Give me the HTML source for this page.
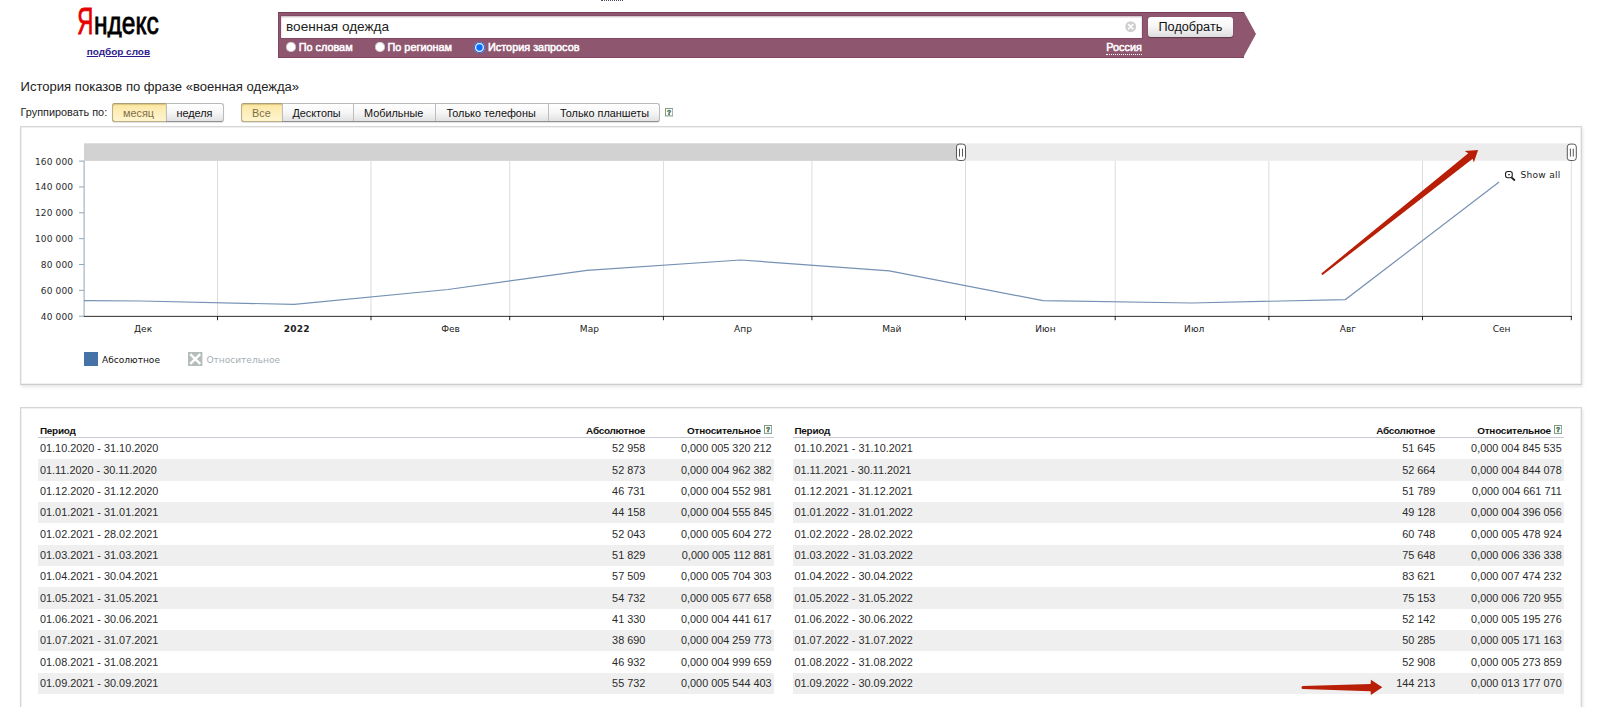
<!DOCTYPE html>
<html lang="ru">
<head>
<meta charset="utf-8">
<title>Яндекс — подбор слов: история запросов</title>
<style>
html,body{margin:0;padding:0;background:#fff;}
body{width:1600px;height:707px;overflow:hidden;position:relative;font-family:"Liberation Sans",sans-serif;font-size:10.87px;color:#000;}
.t{position:absolute;white-space:pre;margin:0;padding:0;}
.abs{position:absolute;}
.bar{position:absolute;left:278px;top:12px;width:966px;height:45.7px;background:#8f566f;box-shadow:inset 0 1px 0 #7a3c5c, inset 1px 0 0 #834761, inset 0 -1px 0 #82455f;}
.bar:after{content:"";position:absolute;left:966px;top:0;width:0;height:0;border-top:22.85px solid transparent;border-bottom:22.85px solid transparent;border-left:12px solid #8f566f;}
.inp{position:absolute;left:281px;top:16.4px;width:861px;height:21.6px;background:#fff;box-shadow:0 0 0 0.6px #7f4260, inset 0 1px 2px rgba(100,40,70,.38);}
.radio{position:absolute;width:10px;height:10px;border-radius:50%;background:#fff;box-shadow:inset 0 0 0 .6px #b9a6ae;}
.radio.on{width:10.8px;height:10.8px;margin:-0.4px;box-shadow:inset 0 0 0 1px #2b62d9, inset 0 0 0 2.3px #e2f5ff;background:#0a6cff;}
.btn{position:absolute;left:1148px;top:17px;width:84.7px;height:20.3px;border-radius:3px;background:linear-gradient(#fff 0%,#f7f7f7 45%,#dedede 100%);box-shadow:0 1px 1px rgba(0,0,0,.35);}
.grp{position:absolute;top:103.2px;height:18.5px;border:1px solid #b9b9b9;border-bottom-color:#8f8f8f;border-radius:3px;background:linear-gradient(#fff 0%,#f6f6f6 50%,#e2e2e2 100%);box-sizing:border-box;box-shadow:0 1px 1px rgba(0,0,0,.12);}
.grp i{position:absolute;top:0;bottom:0;width:1px;background:#bdbdbd;}
.grp b{position:absolute;top:-1px;bottom:-1px;left:-1px;box-sizing:content-box;border:1px solid #bdb085;border-top-color:#aa9e76;border-right:0;border-radius:3px 0 0 3px;background:linear-gradient(#fbe7a0 0%,#fdedb6 40%,#fff4d0 100%);box-shadow:inset 0 1px 1px rgba(150,120,40,.3);font-weight:normal;}
.panel{position:absolute;border:1px solid #d6d6d6;border-bottom-color:#cdcdcd;background:#fff;box-sizing:border-box;box-shadow:1px 2px 3px rgba(0,0,0,.10), inset 0 0 0 1px #f0f0f0;}
.row{position:absolute;height:21.34px;background:#efefef;}
.hl{position:absolute;height:1px;background:#c9c9d6;}
a.t{color:#2c1a8c;text-decoration:underline;}
.w{-webkit-text-stroke:0.5px #fff;}
</style>
</head>
<body>

<header>
<div class="abs" style="left:77px;top:0;width:90px;height:42px;">
<svg class="abs" style="left:0;top:0" width="90" height="42" viewBox="0 0 90 42"><defs><clipPath id="lc"><rect x="0" y="0" width="90" height="37.4"/></clipPath></defs><g font-family="Liberation Sans, sans-serif" clip-path="url(#lc)" stroke-width="0.75"><text x="0" y="0" transform="translate(0.15,34.3) scale(0.6,1)" font-size="37.2" fill="#e60000" stroke="#e60000" vector-effect="non-scaling-stroke">Я</text><text x="0" y="0" transform="translate(17.0,34.3) scale(0.762,1)" fill="#000" stroke="#000" font-size="32.2" vector-effect="non-scaling-stroke">ндекс</text></g></svg>
</div>
<a class="t " style="left:86.70px;top:46px;font-size:9.97px;line-height:12px;font-weight:bold;color:#2c1a8c;">подбор слов</a>
<div class="abs" style="left:601px;top:0;width:22px;height:0;border-top:1px dotted #4a4f66"></div>
<div class="bar"></div>
<div class="inp"></div>
<span class="t " style="left:286.00px;top:18px;font-size:13.60px;line-height:17px;color:#222;">военная одежда</span>
<svg class="abs" style="left:1125px;top:21px" width="11.4" height="11.4" viewBox="0 0 12 12"><circle cx="6" cy="6" r="5.7" fill="#cfcfcf"/><path d="M3.8 3.8L8.2 8.2M8.2 3.8L3.8 8.2" stroke="#fff" stroke-width="1.7" stroke-linecap="round"/></svg>
<div class="btn"></div>
<span class="t " style="left:1158.50px;top:19px;font-size:12.68px;line-height:16px;color:#111;">Подобрать</span>
<span class="radio" style="left:285.8px;top:42.3px"></span>
<span class="t w" style="left:298.70px;top:40px;font-size:10.87px;line-height:14px;color:#fff;">По словам</span>
<span class="radio" style="left:374.8px;top:42.3px"></span>
<span class="t w" style="left:387.50px;top:40px;font-size:10.87px;line-height:14px;color:#fff;">По регионам</span>
<span class="radio on" style="left:474.7px;top:42.3px"></span>
<span class="t w" style="left:488.00px;top:40px;font-size:10.87px;line-height:14px;color:#fff;">История запросов</span>
<span class="t w" style="left:1106.30px;top:40px;font-size:10.87px;line-height:14px;color:#fff;">Россия</span>
<div class="abs" style="left:1106.3px;top:54px;width:35.6px;height:0;border-top:1px dotted #fff"></div>
</header>
<main>
<section class="controls">
<span class="t " style="left:20.60px;top:79px;font-size:13.05px;line-height:16px;color:#222;">История показов по фразе «военная одежда»</span>
<span class="t " style="left:20.60px;top:105px;font-size:10.87px;line-height:14px;color:#222;">Группировать по:</span>
<div class="grp" style="left:112px;width:111.6px;"><b style="width:52.6px"></b><i style="left:52.6px"></i></div>
<span class="t " style="left:123.00px;top:106px;font-size:10.87px;line-height:14px;color:#7d7048;">месяц</span>
<span class="t " style="left:176.40px;top:106px;font-size:10.87px;line-height:14px;color:#111;">неделя</span>
<div class="grp" style="left:241.2px;width:418.9px;"><b style="width:39.6px"></b><i style="left:39.6px"></i><i style="left:111.1px"></i><i style="left:193.3px"></i><i style="left:306.3px"></i></div>
<span class="t " style="left:252.00px;top:106px;font-size:10.87px;line-height:14px;color:#7d7048;">Все</span>
<span class="t " style="left:292.40px;top:106px;font-size:10.87px;line-height:14px;color:#111;">Десктопы</span>
<span class="t " style="left:364.00px;top:106px;font-size:10.87px;line-height:14px;color:#111;">Мобильные</span>
<span class="t " style="left:446.50px;top:106px;font-size:10.87px;line-height:14px;color:#111;">Только телефоны</span>
<span class="t " style="left:560.00px;top:106px;font-size:10.87px;line-height:14px;color:#111;">Только планшеты</span>
<svg class="abs" style="left:664.80px;top:108.30px" width="8.5" height="8.6"><rect x="0.5" y="0.5" width="7.3" height="7.4" fill="#fff" stroke="#7c9c84" stroke-width="1"/><text x="4.15" y="6.65" font-family="Liberation Sans, sans-serif" font-size="6.8" font-weight="bold" text-anchor="middle" fill="#3f704a" stroke="#3f704a" stroke-width="0.45">?</text></svg>
</section>
<section class="chart">
<div class="panel" style="left:20px;top:125.7px;width:1561.5px;height:259.5px;"></div>
<svg class="abs" style="left:0;top:126px" width="1600" height="258" viewBox="0 126 1600 258" font-family="DejaVu Sans, Liberation Sans, sans-serif" font-size="9.06">
<rect x="84" y="143.4" width="1487.5" height="17.4" fill="#ececec"/>
<rect x="84" y="143.4" width="877" height="17.4" fill="#d2d2d2"/>
<rect x="217.0" y="160.8" width="1" height="155.4" fill="#dcdcdc"/>
<rect x="370.5" y="160.8" width="1" height="155.4" fill="#dcdcdc"/>
<rect x="509.2" y="160.8" width="1" height="155.4" fill="#dcdcdc"/>
<rect x="662.9" y="160.8" width="1" height="155.4" fill="#dcdcdc"/>
<rect x="811.4" y="160.8" width="1" height="155.4" fill="#dcdcdc"/>
<rect x="965.0" y="160.8" width="1" height="155.4" fill="#dcdcdc"/>
<rect x="1114.7" y="160.8" width="1" height="155.4" fill="#dcdcdc"/>
<rect x="1268.4" y="160.8" width="1" height="155.4" fill="#dcdcdc"/>
<rect x="1422.0" y="160.8" width="1" height="155.4" fill="#dcdcdc"/>
<rect x="1570.8" y="160.8" width="1" height="155.4" fill="#dcdcdc"/>
<rect x="83.6" y="160.8" width="1" height="156" fill="#8fa6b8"/>
<rect x="79" y="160.60" width="5" height="1" fill="#8fa6b8"/>
<text x="73.2" y="164.50" text-anchor="end" fill="#2a2a2a" letter-spacing="0.12">160 000</text>
<rect x="79" y="186.45" width="5" height="1" fill="#8fa6b8"/>
<text x="73.2" y="190.35" text-anchor="end" fill="#2a2a2a" letter-spacing="0.12">140 000</text>
<rect x="79" y="212.30" width="5" height="1" fill="#8fa6b8"/>
<text x="73.2" y="216.20" text-anchor="end" fill="#2a2a2a" letter-spacing="0.12">120 000</text>
<rect x="79" y="238.15" width="5" height="1" fill="#8fa6b8"/>
<text x="73.2" y="242.05" text-anchor="end" fill="#2a2a2a" letter-spacing="0.12">100 000</text>
<rect x="79" y="264.00" width="5" height="1" fill="#8fa6b8"/>
<text x="73.2" y="267.90" text-anchor="end" fill="#2a2a2a" letter-spacing="0.12">80 000</text>
<rect x="79" y="289.85" width="5" height="1" fill="#8fa6b8"/>
<text x="73.2" y="293.75" text-anchor="end" fill="#2a2a2a" letter-spacing="0.12">60 000</text>
<rect x="79" y="315.70" width="5" height="1" fill="#8fa6b8"/>
<text x="73.2" y="319.60" text-anchor="end" fill="#2a2a2a" letter-spacing="0.12">40 000</text>
<rect x="84" y="315.85" width="1488" height="1.15" fill="#484848"/>
<rect x="217.0" y="316" width="1" height="4.2" fill="#222"/>
<rect x="370.5" y="316" width="1" height="4.2" fill="#222"/>
<rect x="509.2" y="316" width="1" height="4.2" fill="#222"/>
<rect x="662.9" y="316" width="1" height="4.2" fill="#222"/>
<rect x="811.4" y="316" width="1" height="4.2" fill="#222"/>
<rect x="965.0" y="316" width="1" height="4.2" fill="#222"/>
<rect x="1114.7" y="316" width="1" height="4.2" fill="#222"/>
<rect x="1268.4" y="316" width="1" height="4.2" fill="#222"/>
<rect x="1422.0" y="316" width="1" height="4.2" fill="#222"/>
<rect x="1570.8" y="316" width="1" height="4.2" fill="#222"/>
<text x="143.1" y="332" text-anchor="middle" fill="#222">Дек</text>
<text x="296.8" y="332" text-anchor="middle" fill="#222" font-weight="bold" letter-spacing="0.25">2022</text>
<text x="450.5" y="332" text-anchor="middle" fill="#222">Фев</text>
<text x="589.4" y="332" text-anchor="middle" fill="#222">Мар</text>
<text x="743.0" y="332" text-anchor="middle" fill="#222">Апр</text>
<text x="891.8" y="332" text-anchor="middle" fill="#222">Май</text>
<text x="1045.5" y="332" text-anchor="middle" fill="#222">Июн</text>
<text x="1194.2" y="332" text-anchor="middle" fill="#222">Июл</text>
<text x="1347.9" y="332" text-anchor="middle" fill="#222">Авг</text>
<text x="1501.6" y="332" text-anchor="middle" fill="#222">Сен</text>
<polyline fill="none" stroke="#7591b3" stroke-width="1.2" points="84.0,300.6 140.7,301.0 294.3,304.4 448.0,289.5 586.9,270.3 740.6,260.0 889.3,270.9 1043.0,300.6 1191.7,303.0 1345.4,299.6 1499.1,182.0"/>
<rect x="956.5" y="144.1" width="9" height="16.4" rx="2.8" fill="#fff" stroke="#444" stroke-width="0.9"/>
<rect x="959.10" y="148.6" width="0.9" height="8" fill="#444"/><rect x="962.00" y="148.6" width="0.9" height="8" fill="#444"/>
<rect x="1567.3" y="144.1" width="9" height="16.4" rx="2.8" fill="#fff" stroke="#444" stroke-width="0.9"/>
<rect x="1569.90" y="148.6" width="0.9" height="8" fill="#444"/><rect x="1572.80" y="148.6" width="0.9" height="8" fill="#444"/>
<g fill="none" stroke="#1e1e1e"><rect x="1505.55" y="171.5" width="6.7" height="6.3" rx="2.2" stroke-width="1.1"/><path d="M1512.1 178.1L1514.4 179.9" stroke-width="1.9" stroke-linecap="round"/><path d="M1508 174.7H1510" stroke-width="1"/></g>
<text x="1520.6" y="178" fill="#222" letter-spacing="0.25">Show all</text>
<rect x="84" y="352" width="14" height="14" fill="#4572a7"/>
<text x="102" y="362.6" fill="#111">Абсолютное</text>
<rect x="188" y="352" width="14.4" height="14" fill="#b4bcbc"/>
<path d="M190.2 354.2L200.2 363.8M200.2 354.2L190.2 363.8" stroke="#fff" stroke-width="2.4"/>
<text x="206.4" y="362.6" fill="#a6aeb4">Относительное</text>
<path d="M1321.9 272.9 L1468.3 153.2 L1464.7 151.1 L1478.1 149.9 L1473.8 162.6 L1472.7 158.8 L1323.3 274.6 A1.1 1.1 0 0 1 1321.9 272.9 Z" fill="#b81f06"/>
</svg>
</section>
<section class="history">
<div class="panel" style="left:20px;top:406.7px;width:1561.5px;height:320px;"></div>
<span class="t " style="left:40.00px;top:425px;font-size:9.97px;line-height:12px;font-weight:bold;color:#111;letter-spacing:-0.3px;">Период</span>
<span class="t " style="right:955.00px;top:425px;font-size:9.97px;line-height:12px;font-weight:bold;color:#111;letter-spacing:-0.27px;">Абсолютное</span>
<span class="t " style="right:839.30px;top:425px;font-size:9.97px;line-height:12px;font-weight:bold;color:#111;letter-spacing:-0.25px;">Относительное</span>
<svg class="abs" style="left:763.90px;top:425.00px" width="8.4" height="9.1"><rect x="0.5" y="0.5" width="7.2" height="7.9" fill="#fff" stroke="#7c9c84" stroke-width="1"/><text x="4.10" y="6.90" font-family="Liberation Sans, sans-serif" font-size="6.8" font-weight="bold" text-anchor="middle" fill="#3f704a" stroke="#3f704a" stroke-width="0.45">?</text></svg>
<div class="hl" style="left:37.75px;width:736.00px;top:437.3px"></div>
<span class="t " style="left:40.00px;top:441px;font-size:10.87px;line-height:14px;color:#2b2b2b;">01.10.2020 - 31.10.2020</span>
<span class="t " style="right:954.70px;top:441px;font-size:10.87px;line-height:14px;color:#2b2b2b;">52 958</span>
<span class="t " style="right:828.40px;top:441px;font-size:10.87px;line-height:14px;color:#2b2b2b;">0,000 005 320 212</span>
<div class="row" style="left:37.75px;width:736.00px;top:459.39px"></div>
<span class="t " style="left:40.00px;top:463px;font-size:10.87px;line-height:14px;color:#2b2b2b;">01.11.2020 - 30.11.2020</span>
<span class="t " style="right:954.70px;top:463px;font-size:10.87px;line-height:14px;color:#2b2b2b;">52 873</span>
<span class="t " style="right:828.40px;top:463px;font-size:10.87px;line-height:14px;color:#2b2b2b;">0,000 004 962 382</span>
<span class="t " style="left:40.00px;top:484px;font-size:10.87px;line-height:14px;color:#2b2b2b;">01.12.2020 - 31.12.2020</span>
<span class="t " style="right:954.70px;top:484px;font-size:10.87px;line-height:14px;color:#2b2b2b;">46 731</span>
<span class="t " style="right:828.40px;top:484px;font-size:10.87px;line-height:14px;color:#2b2b2b;">0,000 004 552 981</span>
<div class="row" style="left:37.75px;width:736.00px;top:502.07px"></div>
<span class="t " style="left:40.00px;top:505px;font-size:10.87px;line-height:14px;color:#2b2b2b;">01.01.2021 - 31.01.2021</span>
<span class="t " style="right:954.70px;top:505px;font-size:10.87px;line-height:14px;color:#2b2b2b;">44 158</span>
<span class="t " style="right:828.40px;top:505px;font-size:10.87px;line-height:14px;color:#2b2b2b;">0,000 004 555 845</span>
<span class="t " style="left:40.00px;top:527px;font-size:10.87px;line-height:14px;color:#2b2b2b;">01.02.2021 - 28.02.2021</span>
<span class="t " style="right:954.70px;top:527px;font-size:10.87px;line-height:14px;color:#2b2b2b;">52 043</span>
<span class="t " style="right:828.40px;top:527px;font-size:10.87px;line-height:14px;color:#2b2b2b;">0,000 005 604 272</span>
<div class="row" style="left:37.75px;width:736.00px;top:544.75px"></div>
<span class="t " style="left:40.00px;top:548px;font-size:10.87px;line-height:14px;color:#2b2b2b;">01.03.2021 - 31.03.2021</span>
<span class="t " style="right:954.70px;top:548px;font-size:10.87px;line-height:14px;color:#2b2b2b;">51 829</span>
<span class="t " style="right:828.40px;top:548px;font-size:10.87px;line-height:14px;color:#2b2b2b;">0,000 005 112 881</span>
<span class="t " style="left:40.00px;top:569px;font-size:10.87px;line-height:14px;color:#2b2b2b;">01.04.2021 - 30.04.2021</span>
<span class="t " style="right:954.70px;top:569px;font-size:10.87px;line-height:14px;color:#2b2b2b;">57 509</span>
<span class="t " style="right:828.40px;top:569px;font-size:10.87px;line-height:14px;color:#2b2b2b;">0,000 005 704 303</span>
<div class="row" style="left:37.75px;width:736.00px;top:587.43px"></div>
<span class="t " style="left:40.00px;top:591px;font-size:10.87px;line-height:14px;color:#2b2b2b;">01.05.2021 - 31.05.2021</span>
<span class="t " style="right:954.70px;top:591px;font-size:10.87px;line-height:14px;color:#2b2b2b;">54 732</span>
<span class="t " style="right:828.40px;top:591px;font-size:10.87px;line-height:14px;color:#2b2b2b;">0,000 005 677 658</span>
<span class="t " style="left:40.00px;top:612px;font-size:10.87px;line-height:14px;color:#2b2b2b;">01.06.2021 - 30.06.2021</span>
<span class="t " style="right:954.70px;top:612px;font-size:10.87px;line-height:14px;color:#2b2b2b;">41 330</span>
<span class="t " style="right:828.40px;top:612px;font-size:10.87px;line-height:14px;color:#2b2b2b;">0,000 004 441 617</span>
<div class="row" style="left:37.75px;width:736.00px;top:630.11px"></div>
<span class="t " style="left:40.00px;top:633px;font-size:10.87px;line-height:14px;color:#2b2b2b;">01.07.2021 - 31.07.2021</span>
<span class="t " style="right:954.70px;top:633px;font-size:10.87px;line-height:14px;color:#2b2b2b;">38 690</span>
<span class="t " style="right:828.40px;top:633px;font-size:10.87px;line-height:14px;color:#2b2b2b;">0,000 004 259 773</span>
<span class="t " style="left:40.00px;top:655px;font-size:10.87px;line-height:14px;color:#2b2b2b;">01.08.2021 - 31.08.2021</span>
<span class="t " style="right:954.70px;top:655px;font-size:10.87px;line-height:14px;color:#2b2b2b;">46 932</span>
<span class="t " style="right:828.40px;top:655px;font-size:10.87px;line-height:14px;color:#2b2b2b;">0,000 004 999 659</span>
<div class="row" style="left:37.75px;width:736.00px;top:672.79px"></div>
<span class="t " style="left:40.00px;top:676px;font-size:10.87px;line-height:14px;color:#2b2b2b;">01.09.2021 - 30.09.2021</span>
<span class="t " style="right:954.70px;top:676px;font-size:10.87px;line-height:14px;color:#2b2b2b;">55 732</span>
<span class="t " style="right:828.40px;top:676px;font-size:10.87px;line-height:14px;color:#2b2b2b;">0,000 005 544 403</span>
<span class="t " style="left:794.50px;top:425px;font-size:9.97px;line-height:12px;font-weight:bold;color:#111;letter-spacing:-0.3px;">Период</span>
<span class="t " style="right:164.90px;top:425px;font-size:9.97px;line-height:12px;font-weight:bold;color:#111;letter-spacing:-0.27px;">Абсолютное</span>
<span class="t " style="right:49.20px;top:425px;font-size:9.97px;line-height:12px;font-weight:bold;color:#111;letter-spacing:-0.25px;">Относительное</span>
<svg class="abs" style="left:1554.00px;top:425.00px" width="8.4" height="9.1"><rect x="0.5" y="0.5" width="7.2" height="7.9" fill="#fff" stroke="#7c9c84" stroke-width="1"/><text x="4.10" y="6.90" font-family="Liberation Sans, sans-serif" font-size="6.8" font-weight="bold" text-anchor="middle" fill="#3f704a" stroke="#3f704a" stroke-width="0.45">?</text></svg>
<div class="hl" style="left:793.00px;width:771.00px;top:437.3px"></div>
<span class="t " style="left:794.50px;top:441px;font-size:10.87px;line-height:14px;color:#2b2b2b;">01.10.2021 - 31.10.2021</span>
<span class="t " style="right:164.60px;top:441px;font-size:10.87px;line-height:14px;color:#2b2b2b;">51 645</span>
<span class="t " style="right:38.30px;top:441px;font-size:10.87px;line-height:14px;color:#2b2b2b;">0,000 004 845 535</span>
<div class="row" style="left:793.00px;width:771.00px;top:459.39px"></div>
<span class="t " style="left:794.50px;top:463px;font-size:10.87px;line-height:14px;color:#2b2b2b;">01.11.2021 - 30.11.2021</span>
<span class="t " style="right:164.60px;top:463px;font-size:10.87px;line-height:14px;color:#2b2b2b;">52 664</span>
<span class="t " style="right:38.30px;top:463px;font-size:10.87px;line-height:14px;color:#2b2b2b;">0,000 004 844 078</span>
<span class="t " style="left:794.50px;top:484px;font-size:10.87px;line-height:14px;color:#2b2b2b;">01.12.2021 - 31.12.2021</span>
<span class="t " style="right:164.60px;top:484px;font-size:10.87px;line-height:14px;color:#2b2b2b;">51 789</span>
<span class="t " style="right:38.30px;top:484px;font-size:10.87px;line-height:14px;color:#2b2b2b;">0,000 004 661 711</span>
<div class="row" style="left:793.00px;width:771.00px;top:502.07px"></div>
<span class="t " style="left:794.50px;top:505px;font-size:10.87px;line-height:14px;color:#2b2b2b;">01.01.2022 - 31.01.2022</span>
<span class="t " style="right:164.60px;top:505px;font-size:10.87px;line-height:14px;color:#2b2b2b;">49 128</span>
<span class="t " style="right:38.30px;top:505px;font-size:10.87px;line-height:14px;color:#2b2b2b;">0,000 004 396 056</span>
<span class="t " style="left:794.50px;top:527px;font-size:10.87px;line-height:14px;color:#2b2b2b;">01.02.2022 - 28.02.2022</span>
<span class="t " style="right:164.60px;top:527px;font-size:10.87px;line-height:14px;color:#2b2b2b;">60 748</span>
<span class="t " style="right:38.30px;top:527px;font-size:10.87px;line-height:14px;color:#2b2b2b;">0,000 005 478 924</span>
<div class="row" style="left:793.00px;width:771.00px;top:544.75px"></div>
<span class="t " style="left:794.50px;top:548px;font-size:10.87px;line-height:14px;color:#2b2b2b;">01.03.2022 - 31.03.2022</span>
<span class="t " style="right:164.60px;top:548px;font-size:10.87px;line-height:14px;color:#2b2b2b;">75 648</span>
<span class="t " style="right:38.30px;top:548px;font-size:10.87px;line-height:14px;color:#2b2b2b;">0,000 006 336 338</span>
<span class="t " style="left:794.50px;top:569px;font-size:10.87px;line-height:14px;color:#2b2b2b;">01.04.2022 - 30.04.2022</span>
<span class="t " style="right:164.60px;top:569px;font-size:10.87px;line-height:14px;color:#2b2b2b;">83 621</span>
<span class="t " style="right:38.30px;top:569px;font-size:10.87px;line-height:14px;color:#2b2b2b;">0,000 007 474 232</span>
<div class="row" style="left:793.00px;width:771.00px;top:587.43px"></div>
<span class="t " style="left:794.50px;top:591px;font-size:10.87px;line-height:14px;color:#2b2b2b;">01.05.2022 - 31.05.2022</span>
<span class="t " style="right:164.60px;top:591px;font-size:10.87px;line-height:14px;color:#2b2b2b;">75 153</span>
<span class="t " style="right:38.30px;top:591px;font-size:10.87px;line-height:14px;color:#2b2b2b;">0,000 006 720 955</span>
<span class="t " style="left:794.50px;top:612px;font-size:10.87px;line-height:14px;color:#2b2b2b;">01.06.2022 - 30.06.2022</span>
<span class="t " style="right:164.60px;top:612px;font-size:10.87px;line-height:14px;color:#2b2b2b;">52 142</span>
<span class="t " style="right:38.30px;top:612px;font-size:10.87px;line-height:14px;color:#2b2b2b;">0,000 005 195 276</span>
<div class="row" style="left:793.00px;width:771.00px;top:630.11px"></div>
<span class="t " style="left:794.50px;top:633px;font-size:10.87px;line-height:14px;color:#2b2b2b;">01.07.2022 - 31.07.2022</span>
<span class="t " style="right:164.60px;top:633px;font-size:10.87px;line-height:14px;color:#2b2b2b;">50 285</span>
<span class="t " style="right:38.30px;top:633px;font-size:10.87px;line-height:14px;color:#2b2b2b;">0,000 005 171 163</span>
<span class="t " style="left:794.50px;top:655px;font-size:10.87px;line-height:14px;color:#2b2b2b;">01.08.2022 - 31.08.2022</span>
<span class="t " style="right:164.60px;top:655px;font-size:10.87px;line-height:14px;color:#2b2b2b;">52 908</span>
<span class="t " style="right:38.30px;top:655px;font-size:10.87px;line-height:14px;color:#2b2b2b;">0,000 005 273 859</span>
<div class="row" style="left:793.00px;width:771.00px;top:672.79px"></div>
<span class="t " style="left:794.50px;top:676px;font-size:10.87px;line-height:14px;color:#2b2b2b;">01.09.2022 - 30.09.2022</span>
<span class="t " style="right:164.60px;top:676px;font-size:10.87px;line-height:14px;color:#2b2b2b;">144 213</span>
<span class="t " style="right:38.30px;top:676px;font-size:10.87px;line-height:14px;color:#2b2b2b;">0,000 013 177 070</span>
<svg class="abs" style="left:1295px;top:676px" width="95" height="24" viewBox="1295 676 95 24"><path d="M1303 685.95 L1370.6 684.0 L1370.9 679.7 L1382.3 687.2 L1370.9 695 L1370.6 691.3 L1303 689.05 A1.55 1.55 0 0 1 1303 685.95 Z" fill="#b81f06"/></svg>
</section>
</main>
</body></html>
